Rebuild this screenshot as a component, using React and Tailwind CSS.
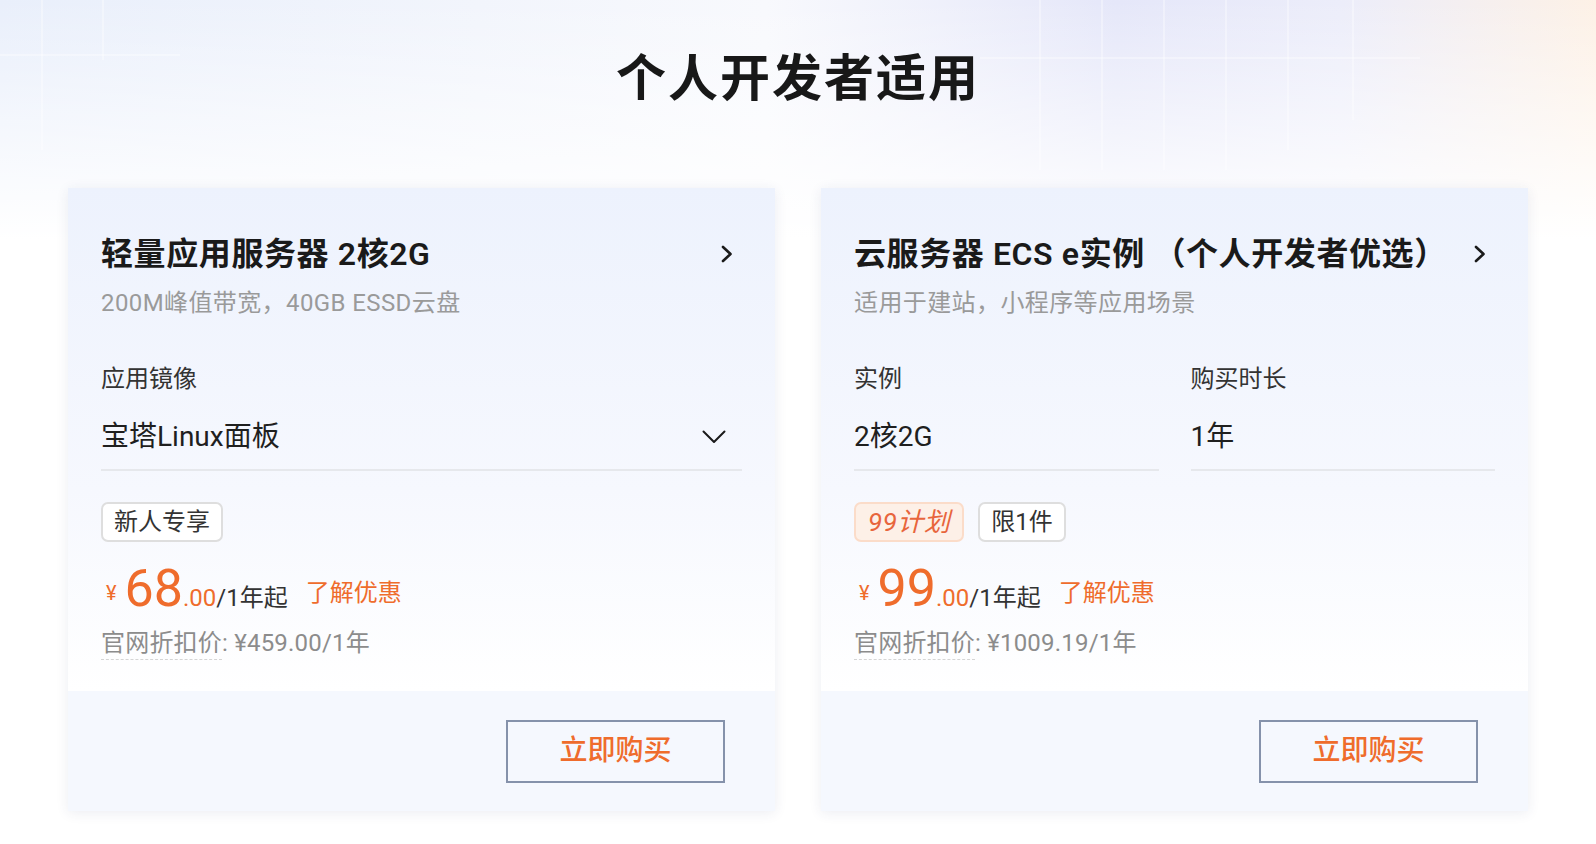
import React from 'react';

const ORANGE = 'text-[#ef6c2c]';

const ChevronRight = () => (
  <svg width="12" height="18" viewBox="0 0 12 18" fill="none" className="mr-[9px]">
    <path d="M2 2L9.5 9L2 16" stroke="#1a1a1a" strokeWidth="2.6" strokeLinecap="round" strokeLinejoin="round" />
  </svg>
);

const ChevronDown = () => (
  <svg width="24" height="14" viewBox="0 0 24 14" fill="none" className="mr-[16px]">
    <path d="M1.5 1.5L12 12L22.5 1.5" stroke="#1a1a1a" strokeWidth="2" strokeLinecap="round" strokeLinejoin="round" />
  </svg>
);

const Tag = ({ children, variant = 'plain' }) => (
  <span
    className={
      variant === 'hot'
        ? 'h-10 inline-flex items-center px-[12px] rounded-[7px] border-2 border-[#fbdcc9] bg-[#fdf0e7] text-[26px] italic tracking-[0.5px] text-[#e8653c]'
        : 'h-10 inline-flex items-center px-[11px] rounded-[7px] border-2 border-[#dedede] bg-white text-[24px] text-[#333]'
    }
  >
    {children}
  </span>
);

const PriceBlock = ({ price, original }) => (
  <>
    <div className="mt-[21px] h-[50px] flex items-baseline leading-none">
      <span className={`${ORANGE} text-[20px] ml-[5px] mr-[8px] self-end mb-[10px]`}>¥</span>
      <span className={`${ORANGE} text-[52px]`}>{price}</span>
      <span className={`${ORANGE} text-[24px]`}>.00</span>
      <span className="text-[24px] text-[#333]">/1年起</span>
      <span className={`${ORANGE} text-[24px] ml-[18px] self-center mt-[10px]`}>了解优惠</span>
    </div>
    <div className="mt-[15px] text-[24px] leading-[30px] text-[#8c8c8c] tracking-[0.2px]">
      <span className="border-b border-dashed border-[#d5d5d5] pb-[2px]">官网折扣价</span>
      <span>: ¥{original}/1年</span>
    </div>
  </>
);

const Card = ({ title, subtitle, children }) => (
  <div className="w-[707px] bg-white shadow-[0_2px_12px_rgba(40,60,110,0.09)] flex flex-col">
    <div className="h-[503px] px-[33px] pt-[46px] bg-[linear-gradient(180deg,#edf2fd_0%,#f6f8fe_60%,#ffffff_100%)]">
      <div className="h-10 flex items-center justify-between">
        <h2 className="text-[32px] font-semibold text-[#1a1a1a] whitespace-nowrap tracking-[0.6px]">{title}</h2>
        <ChevronRight />
      </div>
      <p className="mt-[13px] h-8 leading-8 text-[24px] text-[#9a9a9a] tracking-[0.4px]">{subtitle}</p>
      {children}
    </div>
    <div className="h-[120px] bg-[#f5f8fe] flex items-center justify-end pr-[50px]">
      <button className={`w-[219px] h-[63px] border-2 border-[#8592ab] ${ORANGE} text-[28px] font-medium`}>
        立即购买
      </button>
    </div>
  </div>
);

export default function App() {
  return (
    <div className="relative min-h-screen w-full overflow-hidden font-['Roboto','Noto_Sans_CJK_SC',sans-serif] bg-[linear-gradient(90deg,#e9effb_0%,#f2f5fc_30%,#f8f9fd_48%,#e5e7f9_70%,#ecedfa_84%,#fdf1e6_100%)]">
      <div className="absolute inset-x-0 top-0 h-[240px] bg-[linear-gradient(180deg,rgba(255,255,255,0)_0%,rgba(255,255,255,0.55)_55%,#ffffff_100%)]" />
      <div className="absolute inset-x-0 top-[240px] bottom-0 bg-white" />
      <svg className="absolute left-0 top-0 pointer-events-none" width="1596" height="200" viewBox="0 0 1596 200">
        <g stroke="#ffffff" strokeOpacity="0.45" strokeWidth="1.5">
          <line x1="42" y1="0" x2="42" y2="150" />
          <line x1="103" y1="0" x2="103" y2="60" />
          <line x1="1040" y1="0" x2="1040" y2="170" />
          <line x1="1102" y1="0" x2="1102" y2="170" />
          <line x1="1164" y1="0" x2="1164" y2="170" />
          <line x1="1226" y1="0" x2="1226" y2="170" />
          <line x1="1288" y1="0" x2="1288" y2="150" />
          <line x1="1353" y1="0" x2="1353" y2="120" />
          <line x1="980" y1="58" x2="1420" y2="58" />
          <line x1="0" y1="55" x2="180" y2="55" />
        </g>
      </svg>

      <div className="relative flex flex-col items-center pt-[49px]">
        <h1 className="text-[50px] leading-[60px] font-bold text-[#181818] tracking-[2px]">个人开发者适用</h1>

        <div className="mt-[79px] flex justify-center gap-[46px]">
          <Card title="轻量应用服务器 2核2G" subtitle="200M峰值带宽，40GB ESSD云盘">
            <div className="mt-[44px] h-8 leading-8 text-[24px] text-[#333]">应用镜像</div>
            <div className="mt-[22px] pb-3 border-b-2 border-[#e6e8ec] h-[54px] flex items-center justify-between">
              <span className="text-[28px] text-[#1f1f1f]">宝塔Linux面板</span>
              <ChevronDown />
            </div>
            <div className="mt-[31px] flex gap-[14px]">
              <Tag>新人专享</Tag>
            </div>
            <PriceBlock price="68" original="459.00" />
          </Card>

          <Card title="云服务器 ECS e实例 （个人开发者优选）" subtitle="适用于建站，小程序等应用场景">
            <div className="grid grid-cols-2 gap-x-8">
              <div>
                <div className="mt-[44px] h-8 leading-8 text-[24px] text-[#333]">实例</div>
                <div className="mt-[22px] pb-3 border-b-2 border-[#e6e8ec] h-[54px] flex items-center">
                  <span className="text-[28px] text-[#1f1f1f]">2核2G</span>
                </div>
              </div>
              <div>
                <div className="mt-[44px] h-8 leading-8 text-[24px] text-[#333]">购买时长</div>
                <div className="mt-[22px] pb-3 border-b-2 border-[#e6e8ec] h-[54px] flex items-center">
                  <span className="text-[28px] text-[#1f1f1f]">1年</span>
                </div>
              </div>
            </div>
            <div className="mt-[31px] flex gap-[14px]">
              <Tag variant="hot">99计划</Tag>
              <Tag>限1件</Tag>
            </div>
            <PriceBlock price="99" original="1009.19" />
          </Card>
        </div>
      </div>
    </div>
  );
}
